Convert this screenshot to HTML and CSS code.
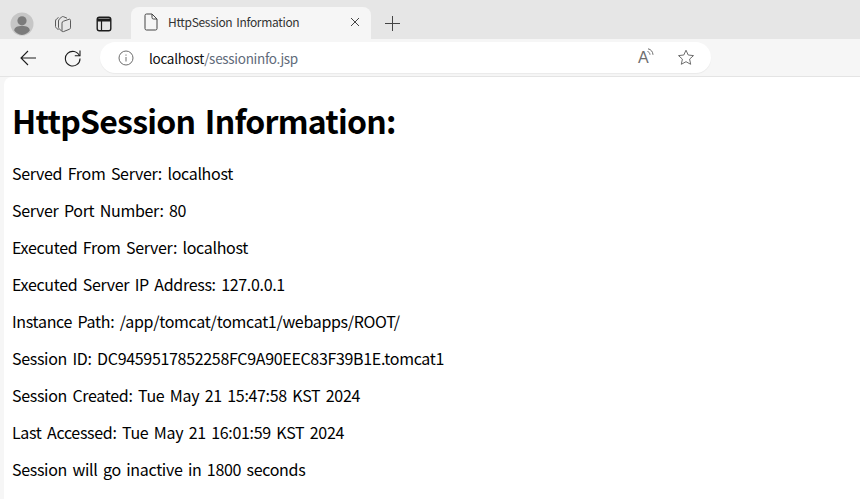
FILE: index.html
```html
<!DOCTYPE html>
<html lang="en">
<head>
<meta charset="utf-8">
<title>HttpSession Information</title>
<link rel="stylesheet" href="styles.css">
</head>
<body>
<div class="browser">
  <div class="tabstrip">
    <div class="avatar">
      <svg width="24" height="24" viewBox="0 0 24 24"><circle cx="12" cy="12" r="11.500" fill="#c6c6c6"/><circle cx="12" cy="8.800" r="4.600" fill="#7b7b7b"/><path d="M4.200 18.600c0-3.200 3-4.600 7.800-4.600s7.800 1.400 7.800 4.600c-1.800 2.400-4.600 4.400-7.800 4.400s-6-2-7.800-4.400z" fill="#7b7b7b"/></svg>
    </div>
    <div class="strip-icon collections">
      <svg width="18" height="18" viewBox="0 0 18 18" fill="none" stroke="#5a5a5a" stroke-width="1"><path d="M4.500 15 1.700 12.200a1 1 0 0 1-.2-.7V6A3 3 0 0 1 2.500 4L4.500 2.500"/><path d="M8 16.500 5 13.500a1.500 1.500 0 0 1-.5-1.100V6A3 3 0 0 1 5.500 4L7.500 2a2 2 0 0 1 2-.3L13 3.200"/><path d="M9.500 6.200 15 4.300a1 1 0 0 1 1.500 1v7.500a1.500 1.500 0 0 1-1 1.400L9.500 16.600a1 1 0 0 1-1.500-1V8.200a2 2 0 0 1 1.500-2z"/></svg>
    </div>
    <div class="strip-icon tabs-icon">
      <svg width="16" height="16" viewBox="0 0 16 16"><rect x="1.200" y="1.200" width="13.600" height="13.600" rx="2.200" fill="none" stroke="#1c1c1c" stroke-width="1.400"/><path d="M1.200 2.500h13.600v3H1.200z" fill="#1c1c1c"/><path d="M5.500 5v9.500" stroke="#1c1c1c" stroke-width="1.200"/></svg>
    </div>
    <div class="tab">
      <svg class="page-icon" width="14" height="18" viewBox="0 0 14 18" fill="none" stroke="#444" stroke-width="1"><path d="M2.500 1h5.500l5 5v9.500a1.500 1.500 0 0 1-1.500 1.500h-9A1.500 1.500 0 0 1 1 15.500v-13A1.500 1.500 0 0 1 2.500 1z"/><path d="M8 1v3.500A1.500 1.500 0 0 0 9.500 6H13"/></svg>
      <span class="tab-title">HttpSession Information</span>
      <svg class="tab-close" width="10" height="10" viewBox="0 0 10 10" stroke="#444" stroke-width="1"><path d="M1 1l8 8M9 1l-8 8"/></svg>
    </div>
    <svg class="new-tab" width="15" height="15" viewBox="0 0 15 15" stroke="#444" stroke-width="1"><path d="M7.500 0v15M0 7.500h15"/></svg>
  </div>
  <div class="toolbar">
    <svg class="back" width="18" height="16" viewBox="0 0 18 16" fill="none" stroke="#1c1c1c" stroke-width="1.100"><path d="M17 8H2M9 1 2 8l7 7"/></svg>
    <svg class="reload" width="18" height="18" viewBox="0 0 18 18" fill="none" stroke="#1c1c1c" stroke-width="1.100"><path d="M15.500 7a7.300 7.300 0 1 0 .5 2.500"/><path d="M16 1.500v5.200h-5.200"/></svg>
    <div class="addressbar">
      <svg class="info" width="16" height="16" viewBox="0 0 16 16" fill="none" stroke="#6e6e6e" stroke-width="1"><circle cx="8" cy="8" r="7"/><path d="M8 7v4.500M8 4.500v1.200"/></svg>
      <span class="url"><span class="host">localhost</span><span class="path">/sessioninfo.jsp</span></span>
      <span class="read-aloud">A<svg width="8" height="10" viewBox="0 0 8 10" fill="none" stroke="#6e6e6e" stroke-width="1"><path d="M.5 3.500c1.500.4 2.300 1.500 2.500 3.200M1 .8c3 .6 4.800 2.800 5 6"/></svg></span>
      <svg class="star" width="18" height="17" viewBox="0 0 18 17" fill="none" stroke="#6e6e6e" stroke-width="1" stroke-linejoin="round"><path d="M9 1.200 11.200 6l5.300.6-3.900 3.500 1.100 5.200L9 12.700l-4.700 2.600 1.100-5.200L1.500 6.600 6.800 6z"/></svg>
    </div>
  </div>
  <main class="page">
    <h1>HttpSession Information:</h1>
    <p>Served From Server: localhost</p>
    <p>Server Port Number: 80</p>
    <p>Executed From Server: localhost</p>
    <p>Executed Server IP Address: 127.0.0.1</p>
    <p>Instance Path: /app/tomcat/tomcat1/webapps/ROOT/</p>
    <p>Session ID: DC9459517852258FC9A90EEC83F39B1E.tomcat1</p>
    <p>Session Created: Tue May 21 15:47:58 KST 2024</p>
    <p>Last Accessed: Tue May 21 16:01:59 KST 2024</p>
    <p>Session will go inactive in 1800 seconds</p>
  </main>
</div>
</body>
</html>
```
FILE: styles.css
```css
* { box-sizing: border-box; }
html, body { margin: 0; height: 100%; overflow: hidden; }
body { font-family: "Noto Sans CJK KR", "Noto Sans", sans-serif; color: #000; }
.browser { width: 860px; height: 499px; display: flex; flex-direction: column; background: #f6f6f6; overflow: hidden; }
.tabstrip { height: 39px; flex: none; background: #e6e6e6; display: flex; align-items: flex-end; padding-left: 10px; }
.avatar { width: 24px; height: 24px; margin-bottom: 3px; }
.avatar svg { display: block; }
.strip-icon { display: flex; }
.collections { margin: 0 0 6px 20px; }
.tabs-icon { margin: 0 0 7px 24px; }
.tab { width: 240px; height: 32px; margin-left: 19px; background: #f6f6f6; border-radius: 8px 8px 0 0; display: flex; align-items: center; padding: 0 11px 2px 13px; }
.page-icon { flex: none; }
.tab-title { flex: 1; margin-left: 10px; font-size: 12px; line-height: 16px; color: #333; white-space: nowrap; letter-spacing: -.32px; word-spacing: 1.500px; }
.tab-close { flex: none; }
.new-tab { margin: 0 0 8px 14px; }
.toolbar { height: 38px; flex: none; display: flex; align-items: center; padding: 0 0 0 19px; border-bottom: 1px solid #e4e4e4; }
.back { flex: none; }
.reload { flex: none; margin-left: 27px; }
.addressbar { flex: none; width: 611px; height: 31px; margin-left: 18px; background: #fff; border-radius: 16px; display: flex; align-items: center; padding-left: 18px; box-shadow: 0 1px 1px rgba(0,0,0,.05); }
.info { flex: none; }
.url { margin-left: 15px; font-size: 13.500px; line-height: 18px; white-space: nowrap; flex: 1; letter-spacing: -.3px; }
.host { color: #111; }
.path { color: #5f6b7a; }
.read-aloud { display: flex; align-items: flex-start; font-family: "Liberation Sans", sans-serif; font-size: 16px; line-height: 16px; color: #6e6e6e; width: 18px; }
.read-aloud svg { margin-top: -2px; margin-left: -2px; flex: none; }
.star { flex: none; margin: 0 16px 0 21px; }
.page { flex: 1; margin-left: 4px; background: #fff; border-top-left-radius: 8px; padding: 1px 8px 0; overflow: hidden; }
h1 { margin: 21px 0; font-size: 32px; line-height: 43px; font-weight: 700; letter-spacing: -.75px; word-spacing: 3px; }
p { margin: 16px 0; font-size: 16px; line-height: 21px; white-space: nowrap; letter-spacing: -.32px; word-spacing: 2.200px; }
```
